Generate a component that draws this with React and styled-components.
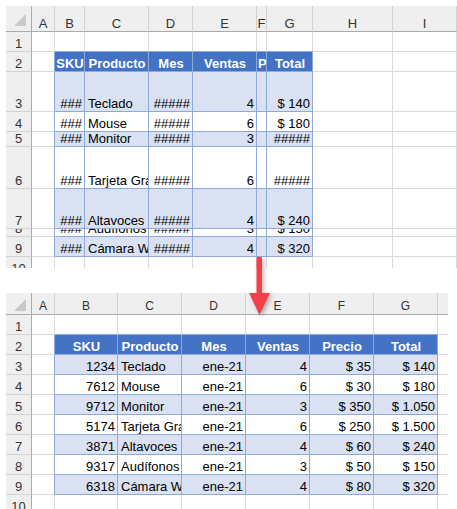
import React from 'react';
import styled, { createGlobalStyle } from 'styled-components';

const GlobalStyle = createGlobalStyle`
  html, body {
    margin: 0;
    padding: 0;
    background: #ffffff;
  }
  body {
    font-family: "Liberation Sans", Arial, sans-serif;
  }
`;

const HEAD_BG = '#efefef';
const HEAD_LINE = '#ababab';
const GRID_LINE = '#dadada';
const TABLE_LINE = '#8eaadb';

const Page = styled.div`
  position: relative;
  width: 457px;
  height: 509px;
  box-sizing: border-box;
  padding: 6px 0 0 6px;
  display: flex;
  flex-direction: column;
  gap: 25px;
  overflow: hidden;
`;

const Viewport = styled.div`
  width: ${p => p.$w}px;
  height: ${p => p.$h}px;
  overflow: hidden;
  flex: none;
`;

const Grid = styled.div`
  display: grid;
  grid-template-columns: ${p => p.$cols};
  grid-template-rows: ${p => p.$rows};
  width: max-content;
  font-size: 13px;
  line-height: 15px;
`;

const Corner = styled.div`
  box-sizing: border-box;
  background: ${HEAD_BG};
  border-right: 1px solid ${HEAD_LINE};
  border-bottom: 1px solid ${HEAD_LINE};
  display: flex;
  justify-content: flex-end;
  align-items: flex-end;
  padding: ${p => p.$pad};

  &::after {
    content: '';
    width: 0;
    height: 0;
    border-left: 12px solid transparent;
    border-bottom: 12px solid #c9c9c9;
  }
`;

const ColHead = styled.div`
  box-sizing: border-box;
  background: ${HEAD_BG};
  border-right: 1px solid #d2d2d2;
  border-bottom: 1px solid ${HEAD_LINE};
  color: #333333;
  font-size: ${p => p.$size}px;
  display: flex;
  justify-content: center;
  align-items: flex-end;
  overflow: hidden;
`;

const RowHead = styled.div`
  box-sizing: border-box;
  background: ${HEAD_BG};
  border-right: 1px solid ${HEAD_LINE};
  border-bottom: 1px solid #d2d2d2;
  color: #333333;
  display: flex;
  justify-content: center;
  align-items: flex-end;
  overflow: hidden;
`;

const KIND_BG = { plain: '#ffffff', band: '#d9e1f2', head: '#4472c4' };

const Cell = styled.div`
  box-sizing: border-box;
  background: ${p => KIND_BG[p.$kind]};
  color: ${p => (p.$kind === 'head' ? '#ffffff' : '#000000')};
  font-weight: ${p => (p.$kind === 'head' ? 700 : 400)};
  border-right: 1px solid ${p => (p.$rb ? TABLE_LINE : GRID_LINE)};
  border-bottom: 1px solid ${p => (p.$bb ? TABLE_LINE : GRID_LINE)};
  padding: ${p => (p.$kind === 'head' ? '0 0 0 1px' : '0 2px 0 3px')};
  display: flex;
  align-items: flex-end;
  justify-content: ${p => ({ l: 'flex-start', r: 'flex-end', c: 'center' }[p.$align])};
  white-space: nowrap;
  overflow: hidden;
`;

const Arrow = styled.svg`
  position: absolute;
  left: 245px;
  top: 254px;
  overflow: visible;
  filter: drop-shadow(2px 2px 2px rgba(0, 0, 0, 0.28));
`;

const LETTERS = 'ABCDEFGHI';
const l = t => [t, 'l'];
const r = t => [t, 'r'];
const c = t => [t, 'c'];

const topData = {
  2: [null, c('SKU'), c('Producto'), c('Mes'), c('Ventas'), l('P'), c('Total')],
  3: [null, r('###'), l('Teclado'), r('#####'), r('4'), null, r('$ 140')],
  4: [null, r('###'), l('Mouse'), r('#####'), r('6'), null, r('$ 180')],
  5: [null, r('###'), l('Monitor'), r('#####'), r('3'), null, r('#####')],
  6: [null, r('###'), l('Tarjeta Gráfica'), r('#####'), r('6'), null, r('#####')],
  7: [null, r('###'), l('Altavoces'), r('#####'), r('4'), null, r('$ 240')],
  8: [null, r('###'), l('Audífonos'), r('#####'), r('3'), null, r('$ 150')],
  9: [null, r('###'), l('Cámara Web'), r('#####'), r('4'), null, r('$ 320')],
};

const products = [
  ['1234', 'Teclado', '4', '$ 35', '$ 140'],
  ['7612', 'Mouse', '6', '$ 30', '$ 180'],
  ['9712', 'Monitor', '3', '$ 350', '$ 1.050'],
  ['5174', 'Tarjeta Gráfica', '6', '$ 250', '$ 1.500'],
  ['3871', 'Altavoces', '4', '$ 60', '$ 240'],
  ['9317', 'Audífonos', '3', '$ 50', '$ 150'],
  ['6318', 'Cámara Web', '4', '$ 80', '$ 320'],
];

const bottomData = {
  2: [null, c('SKU'), c('Producto'), c('Mes'), c('Ventas'), c('Precio'), c('Total')],
};
products.forEach((p, i) => {
  bottomData[i + 3] = [null, r(p[0]), l(p[1]), r('ene-21'), r(p[2]), r(p[3]), r(p[4])];
});

const table = { r0: 2, r1: 9, c0: 1, c1: 6 };
const inTable = (row, col) =>
  row >= table.r0 && row <= table.r1 && col >= table.c0 && col <= table.c1;

const Sheet = ({ widths, heights, headH, headFont, cornerPad, data, viewW, viewH }) => {
  const cells = [<Corner key="corner" $pad={cornerPad} />];
  widths.forEach((w, col) => {
    cells.push(<ColHead key={'h' + col} $size={headFont}>{LETTERS[col]}</ColHead>);
  });
  heights.forEach((h, i) => {
    const row = i + 1;
    cells.push(<RowHead key={'r' + row}>{row}</RowHead>);
    widths.forEach((w, col) => {
      const v = data[row] && data[row][col];
      let kind = 'plain';
      if (inTable(row, col)) {
        if (row === table.r0) kind = 'head';
        else if ((row - table.r0) % 2 === 1) kind = 'band';
      }
      cells.push(
        <Cell
          key={row + '-' + col}
          $kind={kind}
          $align={v ? v[1] : 'l'}
          $rb={inTable(row, col) || inTable(row, col + 1)}
          $bb={inTable(row, col) || inTable(row + 1, col)}
        >
          {v ? v[0] : ''}
        </Cell>
      );
    });
  });
  const px = n => n + 'px';
  return (
    <Viewport $w={viewW} $h={viewH}>
      <Grid
        $cols={[26, ...widths].map(px).join(' ')}
        $rows={[headH, ...heights].map(px).join(' ')}
      >
        {cells}
      </Grid>
    </Viewport>
  );
};

const App = () => {
  return (
    <Page>
      <GlobalStyle />
      <Sheet
        widths={[23, 30, 64, 44, 64, 10, 46, 80, 64]}
        heights={[20, 20, 40, 20, 15, 42, 40, 8, 20, 20]}
        headH={26}
        headFont={13}
        cornerPad="0 5px 5px 0"
        data={topData}
        viewW={451}
        viewH={262}
      />
      <Sheet
        widths={[23, 63, 64, 64, 64, 64, 64, 64]}
        heights={[20, 20, 20, 20, 20, 20, 20, 20, 20, 20]}
        headH={22}
        headFont={12}
        cornerPad="0 5px 3px 0"
        data={bottomData}
        viewW={442}
        viewH={216}
      />
      <Arrow width="30" height="64" viewBox="0 0 30 64">
        <rect x="11.5" y="3" width="5.5" height="38" rx="1" fill="#f2404b" />
        <polygon points="4,39 25,39 14.5,61" fill="#f2404b" />
      </Arrow>
    </Page>
  );
};

export default App;
